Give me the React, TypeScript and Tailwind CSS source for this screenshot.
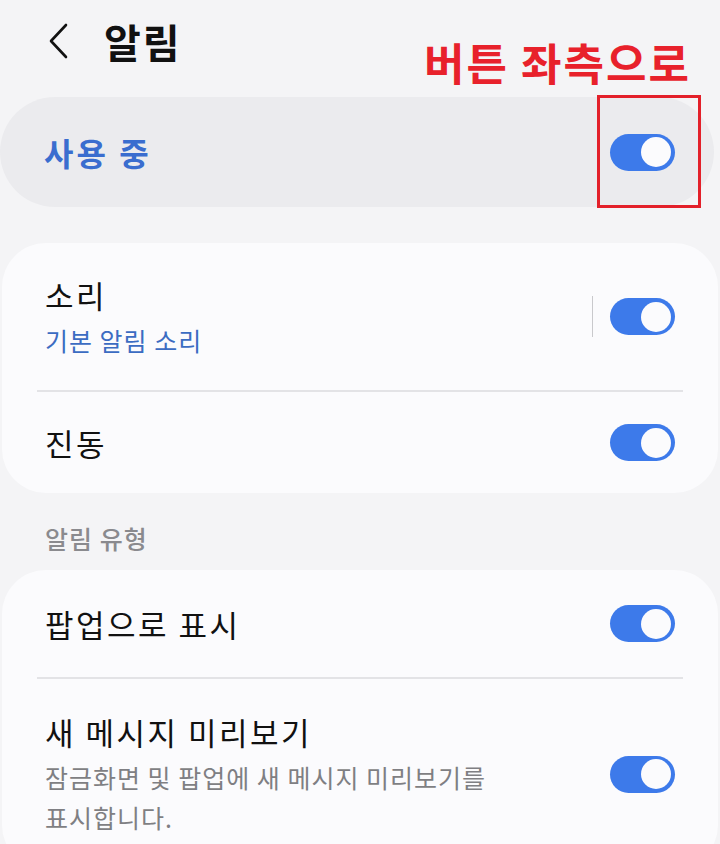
import type { ReactNode } from "react";

const font = { fontFamily: '"Noto Sans CJK KR", "Noto Sans", sans-serif' };

function Toggle() {
  return (
    <div className="flex h-[37px] w-[65px] shrink-0 items-center justify-end rounded-full bg-[#3d7aea] pr-[4px]">
      <div className="h-[30px] w-[30px] rounded-full bg-[#fbfbfd]" />
    </div>
  );
}

function Row({
  title,
  sub,
  subColor,
  className,
  divider,
}: {
  title: string;
  sub?: ReactNode;
  subColor?: string;
  className: string;
  divider?: boolean;
}) {
  return (
    <div className={`flex items-center pl-[43px] pr-[43px] ${className}`}>
      <div className="flex-1">
        <p className="text-[31px] leading-[42px] tracking-[2.5px] text-[#111]">{title}</p>
        {sub && (
          <p className={`mt-[4px] text-[25px] leading-[40px] tracking-[1px] ${subColor}`}>
            {sub}
          </p>
        )}
      </div>
      {divider && <div className="mr-[17px] h-[41px] w-px bg-[#c9c9cc]" />}
      <Toggle />
    </div>
  );
}

export default function App() {
  return (
    <div
      className="relative h-[844px] w-[720px] overflow-hidden bg-[#f4f4f6]"
      style={font}
    >
      <header className="flex h-[82px] items-center pl-[48px]">
        <svg width="22" height="36" viewBox="0 0 22 36" fill="none">
          <polyline
            points="18,2 3,18 18,34"
            stroke="#111"
            strokeWidth="2.6"
            strokeLinecap="round"
            strokeLinejoin="round"
          />
        </svg>
        <h1 className="ml-[34px] text-[40px] font-bold tracking-[2px] text-[#111]">
          알림
        </h1>
      </header>

      <div className="mt-[15px] flex h-[110px] w-[714px] items-center rounded-full bg-[#ebebee] pl-[44px] pr-[39px]">
        <p className="flex-1 text-[32px] font-bold tracking-[3px] text-[#3a6dcf]">
          사용 중
        </p>
        <Toggle />
      </div>

      <div className="mx-[2px] mt-[36px] rounded-[44px] bg-[#fbfbfd]">
        <Row
          title="소리"
          sub="기본 알림 소리"
          subColor="text-[#3b6cc2]"
          className="h-[147px]"
          divider
        />
        <div className="mx-[35px] h-[2px] bg-[#e3e3e6]" />
        <Row title="진동" className="h-[101px]" />
      </div>

      <p className="h-[77px] pl-[45px] pt-[30px] text-[25px] font-medium leading-[30px] tracking-[1px] text-[#8a8a8e]">
        알림 유형
      </p>

      <div className="mx-[2px] rounded-[44px] bg-[#fbfbfd]">
        <Row title="팝업으로 표시" className="h-[107px]" />
        <div className="mx-[35px] h-[2px] bg-[#e3e3e6]" />
        <Row
          title="새 메시지 미리보기"
          sub={
            <>
              잠금화면 및 팝업에 새 메시지 미리보기를
              <br />
              표시합니다.
            </>
          }
          subColor="text-[#7f7f83]"
          className="h-[190px]"
        />
      </div>

      <p className="absolute left-[424px] top-[32px] text-[44px] font-bold leading-[60px] tracking-[2px] text-[#e8212b]">
        버튼 좌측으로
      </p>
      <div className="absolute left-[597px] top-[95px] h-[113px] w-[104px] border-[3px] border-[#e3202a]" />
    </div>
  );
}
